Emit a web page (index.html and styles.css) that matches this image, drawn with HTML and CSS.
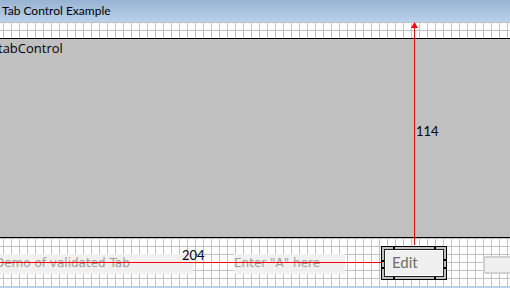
FILE: index.html
```html
<html>
<head>
<meta charset="UTF-8">
<link rel="stylesheet" href="styles.css">
</head>
<body>
<div class="window">
  <div class="titlebar">Tab Control Example</div>
  <div class="surface">
    <div class="tab-control">tabControl</div>
    <div class="field-row">
      <div class="textbox validated">Demo of validated Tab</div>
      <div class="textbox entry">Enter "A" here</div>
      <div class="edit-frame">
        <div class="edit-inner"><div class="edit-box">Edit</div></div>
        <span class="handle top-a"></span>
        <span class="handle top-b"></span>
        <span class="handle bottom-a"></span>
        <span class="handle bottom-b"></span>
        <span class="handle left-a"></span>
        <span class="handle left-b"></span>
        <span class="handle right-a"></span>
        <span class="handle right-b"></span>
      </div>
      <div class="textbox spare"></div>
    </div>

    <!-- snap lines of the selected control -->
    <svg class="snaplines" width="510" height="264" viewBox="0 0 510 264">
      <line x1="414.5" y1="3" x2="414.5" y2="223" stroke="#ff0000" stroke-width="1"/>
      <polygon points="414.5,0 411,6 418,6" fill="#ff0000"/>
      <line x1="0" y1="240.5" x2="381" y2="240.5" stroke="#ff0000" stroke-width="1"/>
    </svg>
    <div class="dim dim-v">114</div>
    <div class="dim dim-h">204</div>
  </div>
  <div class="statusstrip"></div>
</div>
</body>
</html>
```

FILE: styles.css
```css
BODY
{
  margin: 0;
  padding: 0;
  background: white;
  font-family: Lato, "Open Sans", sans-serif;
}
.window
{
  width: 510px;
  height: 288px;
  overflow: hidden;
}
.titlebar
{
  height: 22px;
  line-height: 22px;
  padding-left: 2px;
  font-size: 12px;
  color: #000;
  background: linear-gradient(to bottom, #98b3d3, #bad1ea);
}
.surface
{
  position: relative;
  height: 264px;
  padding-top: 16px;
  box-sizing: border-box;
  background-color: #fff;
  background-image:
    linear-gradient(to right, #c2c2c2 1px, transparent 1px),
    linear-gradient(to bottom, #c2c2c2 1px, transparent 1px);
  background-size: 8px 8px;
  background-position: 3px 0, 0 0;
}
.tab-control
{
  height: 197px;
  border-top: 1px solid #000;
  border-bottom: 1px solid #000;
  background: #c0c0c0;
  margin-left: -2px;
  padding-top: 1px;
  font-family: "Open Sans", sans-serif;
  font-size: 13px;
  line-height: 17px;
  color: #000;
}
.field-row
{
  display: flex;
  align-items: flex-start;
  margin-top: 8px;
}
.textbox
{
  flex: none;
  box-sizing: border-box;
  background: #f0f0f0;
  font-family: "DejaVu Sans", sans-serif;
  font-size: 12px;
  color: #9c9c9c;
  white-space: nowrap;
}
.validated
{
  width: 201px;
  height: 20px;
  margin-top: 8px;
  margin-left: -8px;
  padding: 2px 0 0 3px;
}
.entry
{
  width: 111px;
  height: 20px;
  margin-top: 8px;
  margin-left: 41px;
  padding: 2px 0 0 0;
}
.spare
{
  width: 40px;
  height: 18px;
  margin-top: 10px;
  margin-left: 36px;
  border: 2px solid #d0d0d0;
  border-right: none;
  border-radius: 3px 0 0 3px;
}
.edit-frame
{
  position: relative;
  flex: none;
  width: 66px;
  height: 34px;
  box-sizing: border-box;
  margin-left: 36px;
  border: 1px solid #000;
  background: #c0c0c0;
  padding: 2px;
}
.edit-inner
{
  height: 100%;
  box-sizing: border-box;
  border: 1px solid #202020;
}
.edit-box
{
  height: 100%;
  box-sizing: border-box;
  border: 1px solid #fbfbfb;
  background: #f0f0f0;
  padding-left: 6px;
  font-size: 15px;
  line-height: 22px;
  color: #6c6c6c;
}
.handle
{
  position: absolute;
  background: #000;
}
.top-a, .top-b, .bottom-a, .bottom-b { width: 2px; height: 3px; }
.left-a, .left-b, .right-a, .right-b { width: 3px; height: 2px; }
.top-a { left: 11px; top: -1px; }
.top-b { left: 52px; top: -1px; }
.bottom-a { left: 11px; bottom: -1px; }
.bottom-b { left: 52px; bottom: -1px; }
.left-a { left: -1px; top: 13px; }
.left-b { left: -1px; top: 20px; }
.right-a { right: -1px; top: 12px; }
.right-b { right: -1px; top: 20px; }
.snaplines
{
  position: absolute;
  left: 0;
  top: 0;
}
.dim
{
  position: absolute;
  font-size: 13px;
  line-height: 13px;
  color: #000;
}
.dim-v { left: 416px; top: 103px; }
.dim-h { left: 182px; top: 227px; }
.statusstrip
{
  height: 2px;
  background: #bad1ea;
}
```
